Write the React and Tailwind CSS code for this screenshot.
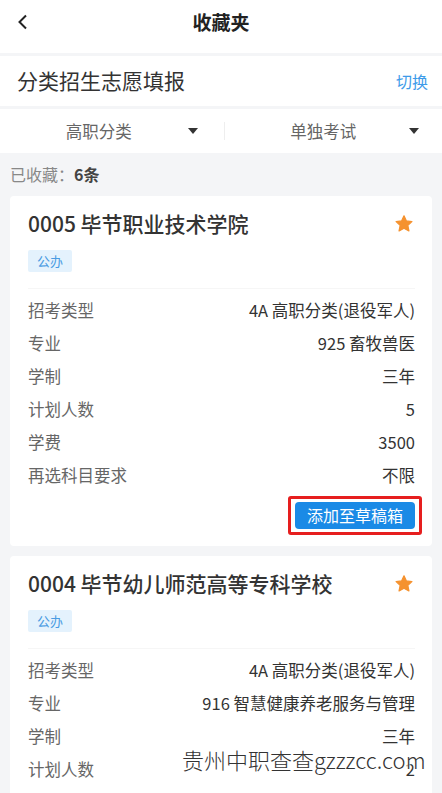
import React from "react";

const font = { fontFamily: '"Noto Sans CJK SC", "Noto Sans", sans-serif' };

function Star() {
  return (
    <svg width="20" height="20" viewBox="0 0 24 24" className="shrink-0">
      <path
        d="M12 2.2l2.9 6.1 6.6.8-4.9 4.6 1.3 6.6L12 17.1l-5.9 3.2 1.3-6.6-4.9-4.6 6.6-.8z"
        fill="#f5922f"
        stroke="#f5922f"
        strokeWidth="1.5"
        strokeLinejoin="round"
      />
    </svg>
  );
}

function Caret() {
  return (
    <svg width="10" height="6" viewBox="0 0 10 6">
      <path d="M0 0h10L5 6z" fill="#333" />
    </svg>
  );
}

function Row({ label, value }) {
  return (
    <div className="flex h-[33px] items-center justify-between text-[16.5px]">
      <span className="text-[#666]">{label}</span>
      <span className="text-[#333]">{value}</span>
    </div>
  );
}

function Card({ title, rows, button }) {
  return (
    <div className="mx-[10px] rounded-[4px] bg-white pl-[18px] pr-[17px] pt-[13px]">
      <div className="flex h-[30px] items-center justify-between">
        <span className="text-[21px] font-medium text-[#333]">{title}</span>
        <span className="mr-[1px]"><Star /></span>
      </div>
      <div className="mt-[11px] flex">
        <span className="rounded-[2px] bg-[#e4f2fd] px-[9px] text-[13px] leading-[22px] text-[#4a9be2]">公办</span>
      </div>
      <div className="mt-[16px] border-t border-[#f6f6f6] pt-[5px]">
        {rows.map((r) => (
          <Row key={r[0]} label={r[0]} value={r[1]} />
        ))}
      </div>
      {button && (
        <div className="flex justify-end pb-[11px] pt-[4px]">
          <div className="-mr-[7px] rounded-[3px] border-[3px] border-[#e61e1e] px-[4px] py-[3px]">
            <div className="rounded-[4px] bg-[#1a8ae6] px-[12px] text-[16px] leading-[27px] text-white">添加至草稿箱</div>
          </div>
        </div>
      )}
    </div>
  );
}

export default function App() {
  return (
    <div className="relative min-h-[793px] w-[442px] overflow-hidden bg-[#f4f5f7]" style={font}>
      <div className="relative flex h-[53px] justify-center bg-white pt-[8px]">
        <svg className="absolute left-[16px] top-[14px]" width="14" height="16" viewBox="0 0 14 16">
          <path d="M10 1.5L3.5 8l6.5 6.5" fill="none" stroke="#222" strokeWidth="2" />
        </svg>
        <span className="text-[19px] font-bold leading-[28px] text-[#222]">收藏夹</span>
      </div>
      <div className="mt-[3px] flex h-[50px] items-center justify-between bg-white pl-[17px] pr-[14px]">
        <span className="text-[21px] text-[#333]">分类招生志愿填报</span>
        <span className="text-[16px] text-[#3d9be9]">切换</span>
      </div>
      <div className="mt-[3px] flex h-[44px] items-center bg-white">
        <div className="relative flex flex-1 items-center justify-center pr-[26px]">
          <span className="text-[16.5px] text-[#666]">高职分类</span>
          <span className="absolute right-[26px] top-[9px]"><Caret /></span>
        </div>
        <div className="h-[18px] w-px bg-[#eee]" />
        <div className="relative flex flex-1 items-center justify-center pr-[20px]">
          <span className="text-[16.5px] text-[#666]">单独考试</span>
          <span className="absolute right-[23px] top-[9px]"><Caret /></span>
        </div>
      </div>
      <div className="flex h-[43px] items-center pb-[2px] pl-[10px] text-[16px]">
        <span className="text-[#888]">已收藏：</span>
        <span className="font-bold text-[#444]">6条</span>
      </div>
      <Card
        title="0005 毕节职业技术学院"
        button
        rows={[
          ["招考类型", "4A 高职分类(退役军人)"],
          ["专业", "925 畜牧兽医"],
          ["学制", "三年"],
          ["计划人数", "5"],
          ["学费", "3500"],
          ["再选科目要求", "不限"],
        ]}
      />
      <div className="h-[10px]" />
      <Card
        title="0004 毕节幼儿师范高等专科学校"
        rows={[
          ["招考类型", "4A 高职分类(退役军人)"],
          ["专业", "916 智慧健康养老服务与管理"],
          ["学制", "三年"],
          ["计划人数", "2"],
          ["学费", "3500"],
          ["再选科目要求", "不限"],
        ]}
      />
      <div
        className="pointer-events-none absolute left-[182px] top-[743px] text-[22px] font-light text-[#333]"
        style={{ textShadow: "0 0 2px #fff, 0 0 2px #fff, 0 0 2px #fff" }}
      >
        贵州中职查查gzzzcc.com
      </div>
    </div>
  );
}
